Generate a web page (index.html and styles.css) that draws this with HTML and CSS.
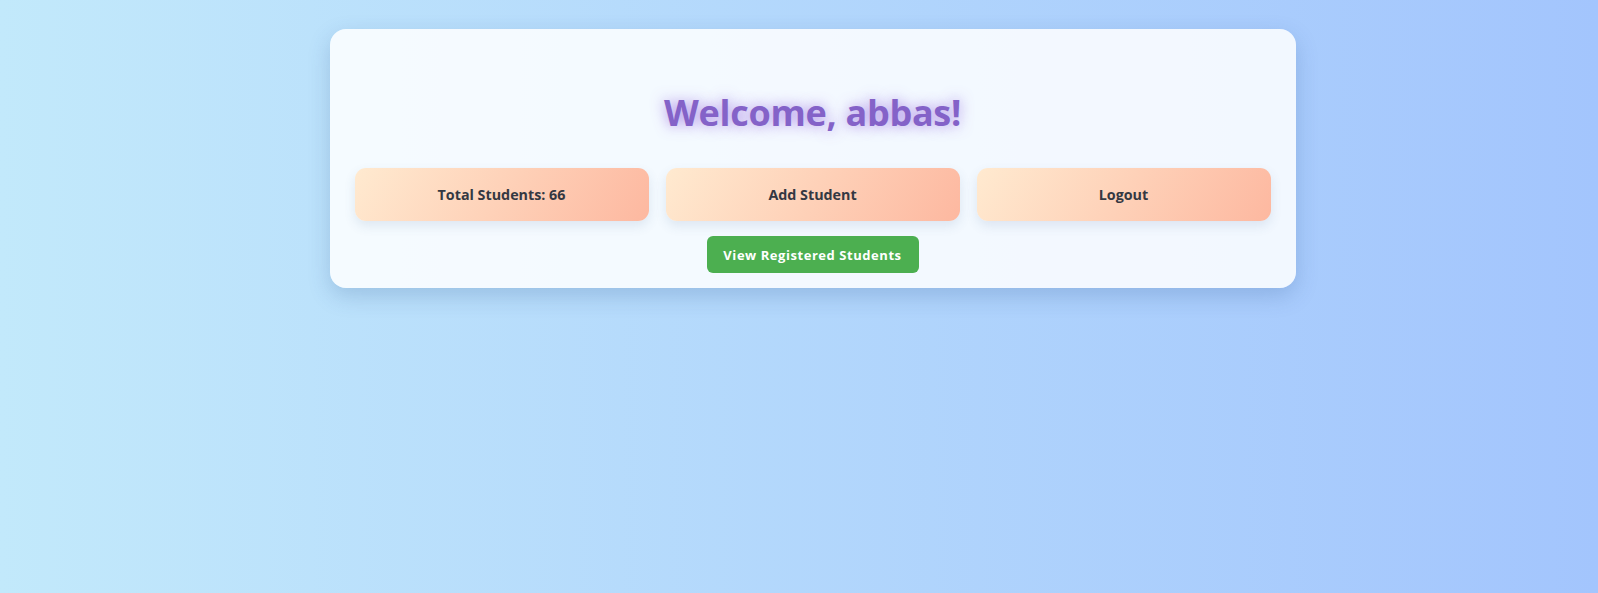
FILE: index.html
```html
<!DOCTYPE html>
<html lang="en">
<head>
<meta charset="utf-8">
<title>Dashboard</title>
<link rel="stylesheet" href="styles.css">
</head>
<body>
<main class="page">
  <section class="card">
    <h1 class="welcome">Welcome, abbas!</h1>
    <div class="actions">
      <div class="tile">Total Students: 66</div>
      <a class="tile" href="#">Add Student</a>
      <a class="tile" href="#">Logout</a>
    </div>
    <div class="footer">
      <a class="view-btn" href="#">View Registered Students</a>
    </div>
  </section>
</main>
</body>
</html>
```

FILE: styles.css
```css
* { box-sizing: border-box; }

html, body {
  margin: 0;
  height: 100%;
}

body {
  font-family: "Open Sans", "Noto Sans", sans-serif;
  background: linear-gradient(to right, #c2e9fb, #a3c5fd);
  color: #3b3f4a;
}

.page {
  display: flex;
  justify-content: center;
  padding: 29px 0 0 27px;
}

.card {
  width: 966px;
  background: rgba(255, 255, 255, 0.85);
  border-radius: 16px;
  box-shadow: 0 8px 22px rgba(40, 80, 140, 0.22);
  padding: 25px 25px 15px;
}

.welcome {
  margin: 37px 0 33px;
  text-align: center;
  font-size: 36px;
  line-height: 44px;
  font-weight: 700;
  color: #8462c8;
  text-shadow: 0 0 14px rgba(140, 90, 220, 0.7);
  letter-spacing: -0.3px;
}

.actions {
  display: flex;
  gap: 17px;
}

.tile {
  flex: 1;
  height: 53px;
  display: flex;
  align-items: center;
  justify-content: center;
  border-radius: 11px;
  background: linear-gradient(120deg, #ffead0 0%, #fdb8a0 100%);
  box-shadow: 0 5px 12px rgba(60, 90, 140, 0.12);
  font-size: 14.3px;
  font-weight: 700;
  color: #343842;
  text-decoration: none;
  padding-bottom: 1px;
}

.footer {
  display: flex;
  justify-content: center;
  margin-top: 15px;
}

.view-btn {
  display: inline-flex;
  align-items: center;
  justify-content: center;
  width: 212px;
  height: 37px;
  background: #4caf50;
  color: #fff;
  border-radius: 6px;
  font-size: 13px;
  font-weight: 700;
  letter-spacing: 0.55px;
  text-decoration: none;
}
```
